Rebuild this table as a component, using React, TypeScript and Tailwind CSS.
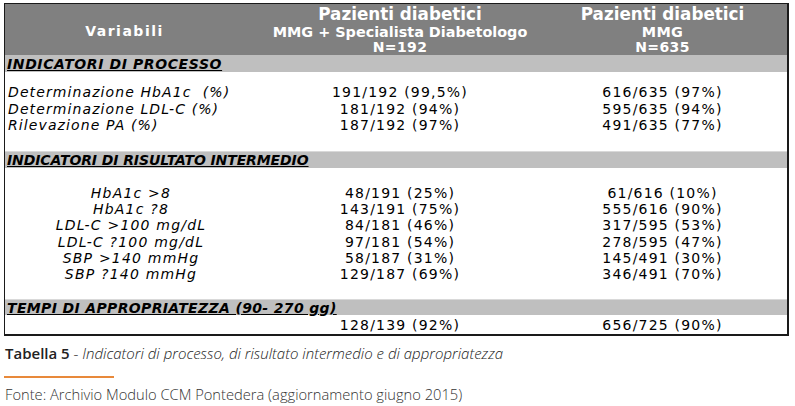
export default function App() {
  const proc = [
    ["Determinazione HbA1c  (%)", "191/192 (99,5%)", "616/635 (97%)"],
    ["Determinazione LDL-C (%)", "181/192 (94%)", "595/635 (94%)"],
    ["Rilevazione PA (%)", "187/192 (97%)", "491/635 (77%)"],
  ];
  const inter = [
    ["HbA1c >8", "48/191 (25%)", "61/616 (10%)"],
    ["HbA1c ?8", "143/191 (75%)", "555/616 (90%)"],
    ["LDL-C >100 mg/dL", "84/181 (46%)", "317/595 (53%)"],
    ["LDL-C ?100 mg/dL", "97/181 (54%)", "278/595 (47%)"],
    ["SBP >140 mmHg", "58/187 (31%)", "145/491 (30%)"],
    ["SBP ?140 mmHg", "129/187 (69%)", "346/491 (70%)"],
  ];
  const tf = { fontFamily: '"DejaVu Sans", Verdana, sans-serif' };
  const cf = { fontFamily: '"Open Sans", "Noto Sans", sans-serif' };
  return (
    <div className="w-[795px] h-[406px] bg-white overflow-hidden pt-[3px] pl-[4px]">
      <div
        className="w-[785px] border-l border-t border-r-2 border-b-2 border-[#1a1a1a] text-black"
        style={tf}
      >
        {/* header */}
        <div className="grid grid-cols-[291px_208px_1fr] h-[51px] bg-[#808080] text-white font-bold whitespace-nowrap">
          <div className="flex items-center justify-center pr-[52px] pt-[3px] text-[14px] tracking-[1.5px]">
            Variabili
          </div>
          <div className="flex flex-col items-center pt-[1px]">
            <div className="text-[16.8px] leading-[19px]">Pazienti diabetici</div>
            <div className="text-[14.4px] leading-[16px]">MMG + Specialista Diabetologo</div>
            <div className="text-[14px] leading-[15px] tracking-[0.4px]">N=192</div>
          </div>
          <div className="flex flex-col items-center pt-[1px] pl-[34px]">
            <div className="text-[16.8px] leading-[19px]">Pazienti diabetici</div>
            <div className="text-[14.4px] leading-[16px] tracking-[0.4px]">MMG</div>
            <div className="text-[14px] leading-[15px] tracking-[0.4px]">N=635</div>
          </div>
        </div>

        {/* section 1 */}
        <div className="h-[17px] bg-[#bfbfbf] flex items-center pl-[2px] text-[14px] tracking-[0.6px] font-bold italic underline leading-none whitespace-nowrap">
          INDICATORI DI PROCESSO
        </div>
        <div className="pt-[12px] pb-[17px] text-[14px] tracking-[1.2px] whitespace-nowrap">
          {proc.map((r) => (
            <div key={r[0]} className="grid grid-cols-[291px_208px_1fr] h-[16.5px] items-center leading-none">
              <div className="italic pl-[3px] whitespace-pre tracking-[1.1px]">{r[0]}</div>
              <div className="text-center">{r[1]}</div>
              <div className="text-center pl-[34px]">{r[2]}</div>
            </div>
          ))}
        </div>

        {/* section 2 */}
        <div className="h-[17px] bg-[#bfbfbf] border-t border-[#d9d9d9] flex items-center pl-[2px] text-[14px] tracking-[-0.1px] font-bold italic underline leading-none whitespace-nowrap">
          INDICATORI DI RISULTATO INTERMEDIO
        </div>
        <div className="pt-[17px] pb-[17px] text-[14px] tracking-[1.2px] whitespace-nowrap">
          {inter.map((r) => (
            <div key={r[0]} className="grid grid-cols-[291px_208px_1fr] h-[16.3px] items-center leading-none">
              <div className="italic text-center pr-[39px] whitespace-pre">{r[0]}</div>
              <div className="text-center">{r[1]}</div>
              <div className="text-center pl-[34px]">{r[2]}</div>
            </div>
          ))}
        </div>

        {/* section 3 */}
        <div className="h-[16px] bg-[#bfbfbf] border-t border-[#d9d9d9] flex items-center pl-[2px] text-[14px] tracking-[0.35px] font-bold italic underline leading-none whitespace-nowrap">
          TEMPI DI APPROPRIATEZZA (90- 270 gg)
        </div>
        <div className="grid grid-cols-[291px_208px_1fr] h-[19px] items-center leading-none text-[14px] tracking-[1.2px] whitespace-nowrap">
          <div />
          <div className="text-center">128/139 (92%)</div>
          <div className="text-center pl-[34px]">656/725 (90%)</div>
        </div>
      </div>

      {/* caption */}
      <div className="mt-[7px] pl-[1px] text-[15px] leading-[20px] text-[#222] whitespace-nowrap" style={cf}>
        <span className="font-semibold">Tabella 5</span>
        <span className="font-light"> - </span>
        <span className="font-light italic">Indicatori di processo, di risultato intermedio e di appropriatezza</span>
      </div>
      <div className="mt-[13px] w-[110px] h-[1.5px] bg-[#e8893a]" />
      <div className="mt-[6px] pl-[1px] text-[14.7px] leading-[20px] text-[#333] font-light whitespace-nowrap" style={cf}>
        Fonte: Archivio Modulo CCM Pontedera (aggiornamento giugno 2015)
      </div>
    </div>
  );
}
